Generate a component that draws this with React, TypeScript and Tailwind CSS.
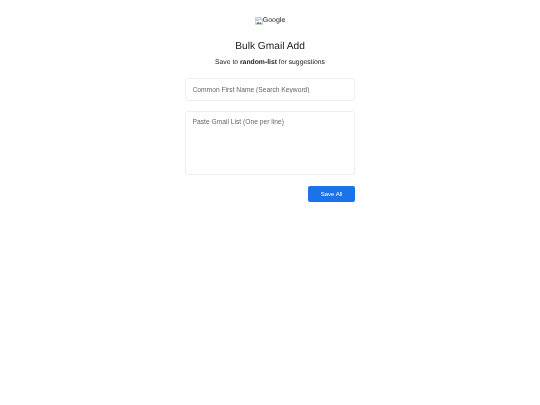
export default function App() {
  return (
    <div className="min-h-[405px] w-full bg-white font-['Liberation_Sans',Arial,sans-serif] text-[#202124] [text-rendering:geometricPrecision]">
      <div className="mx-auto flex w-[170px] flex-col pt-4 [will-change:transform]">
        <div className="mt-px flex h-[8px] items-center justify-center text-[7px] text-[#202124]">
          <svg width="8" height="8" viewBox="0 0 16 16" className="shrink-0">
            <path d="M1 1h10l4 4v10H1z" fill="#fff" stroke="#a0a0a0" />
            <path d="M11 1v4h4" fill="#e8e8e8" stroke="#a0a0a0" />
            <path d="M2 14l4-5 3 3 2-2 3 4z" fill="#5a9e4b" />
            <path d="M2 3h7v5H2z" fill="#b9cdf0" />
          </svg>
          <span>Google</span>
        </div>
        <h1 className="mt-[13px] text-center text-[10.2px] leading-[18px] font-normal text-[#202124]">Bulk Gmail Add</h1>
        <p className="mt-[1px] text-center text-[6.8px] leading-[12px] text-[#202124]">
          Save to <b>random-list</b> for suggestions
        </p>
        <input
          placeholder="Common First Name (Search Keyword)"
          className="mt-[9px] box-border h-[23px] w-full rounded-[3px] border border-[#eeeeee] px-[6.5px] text-[6.7px] outline-none placeholder:text-[#666666]"
        />
        <textarea
          placeholder="Paste Gmail List (One per line)"
          className="mt-[10px] box-border block h-[64px] w-full resize-none rounded-[3px] border border-[#eeeeee] px-[6.5px] py-[5px] text-[6.7px] leading-[10px] outline-none placeholder:text-[#666666]"
        />
        <div className="mt-[11px] flex justify-end">
          <button className="h-[16px] w-[47px] rounded-[2px] bg-[#1a73e8] text-[6px] text-white">Save All</button>
        </div>
      </div>
    </div>
  );
}
